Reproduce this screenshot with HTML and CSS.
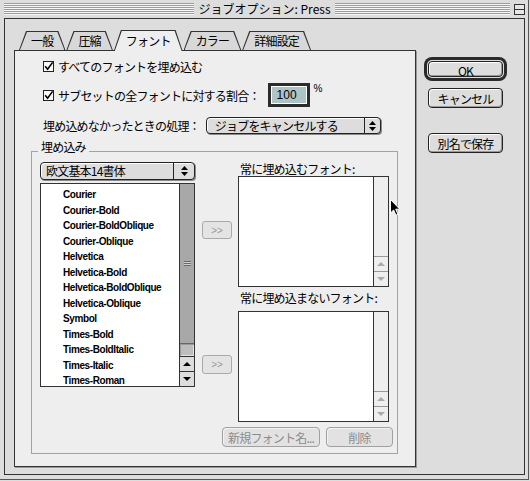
FILE: index.html
```html
<!DOCTYPE html>
<html lang="ja">
<head>
    <meta charset="UTF-8">
    <title>ジョブオプション: Press</title>
    <link rel="stylesheet" href="styles.css">
</head>
<body>
<div class="window">
    <div class="titlebar">
        <span class="stripes"></span>
        <span class="title">ジョブオプション: Press</span>
        <span class="titlebar-right">
            <span class="stripes"></span>
            <span class="collapse-box"></span>
        </span>
    </div>

    <div class="frame">
        <div class="tab-area">
            <div class="tabs">
                <div class="tab"><span class="tab-label">一般</span></div>
                <div class="tab"><span class="tab-label">圧縮</span></div>
                <div class="tab active"><span class="tab-label">フォント</span></div>
                <div class="tab"><span class="tab-label">カラー</span></div>
                <div class="tab"><span class="tab-label">詳細設定</span></div>
            </div>

            <div class="panel">
                <label class="option first">
                    <svg class="checkbox" width="11" height="11" viewBox="0 0 11 11"><rect x="0.5" y="0.5" width="10" height="10" fill="#fafafa" stroke="#222"/><path d="M2.2 5.2 L4.6 8.2 L9.6 1.4" fill="none" stroke="#000" stroke-width="1.6"/></svg>
                    <span>すべてのフォントを埋め込む</span>
                </label>

                <label class="option subset">
                    <svg class="checkbox" width="11" height="11" viewBox="0 0 11 11"><rect x="0.5" y="0.5" width="10" height="10" fill="#fafafa" stroke="#222"/><path d="M2.2 5.2 L4.6 8.2 L9.6 1.4" fill="none" stroke="#000" stroke-width="1.6"/></svg>
                    <span>サブセットの全フォントに対する割合：</span>
                    <span class="percent-field">100</span>
                    <span class="percent-sign">%</span>
                </label>

                <div class="option failed">
                    <span>埋め込めなかったときの処理：</span>
                    <div class="popup job-action">
                        <span class="popup-label">ジョブをキャンセルする</span>
                        <span class="popup-arrows">
                            <svg width="7" height="10" viewBox="0 0 7 10"><path d="M3.5 0 L7 4 L0 4 Z M0 6 L7 6 L3.5 10 Z" fill="#000"/></svg>
                        </span>
                    </div>
                </div>

                <fieldset class="embed-group">
                    <legend>埋め込み</legend>
                    <div class="embed-columns">
                        <div class="left-col">
                            <div class="popup font-set">
                                <span class="popup-label">欧文基本14書体</span>
                                <span class="popup-arrows">
                                    <svg width="7" height="10" viewBox="0 0 7 10"><path d="M3.5 0 L7 4 L0 4 Z M0 6 L7 6 L3.5 10 Z" fill="#000"/></svg>
                                </span>
                            </div>
                            <div class="list-box font-list">
                                <ul>
                                    <li>Courier</li>
                                    <li>Courier-Bold</li>
                                    <li>Courier-BoldOblique</li>
                                    <li>Courier-Oblique</li>
                                    <li>Helvetica</li>
                                    <li>Helvetica-Bold</li>
                                    <li>Helvetica-BoldOblique</li>
                                    <li>Helvetica-Oblique</li>
                                    <li>Symbol</li>
                                    <li>Times-Bold</li>
                                    <li>Times-BoldItalic</li>
                                    <li>Times-Italic</li>
                                    <li>Times-Roman</li>
                                </ul>
                                <div class="scrollbar">
                                    <div class="thumb"><span class="grip"></span></div>
                                    <div class="track"></div>
                                    <div class="arrow up"></div>
                                    <div class="arrow down"></div>
                                </div>
                            </div>
                        </div>

                        <div class="mid-col">
                            <button class="move-btn to-always" disabled>&gt;&gt;</button>
                            <button class="move-btn to-never" disabled>&gt;&gt;</button>
                        </div>

                        <div class="right-col">
                            <div class="list-caption">常に埋め込むフォント:</div>
                            <div class="list-box side-list">
                                <ul></ul>
                                <div class="scrollbar idle">
                                    <div class="track"></div>
                                    <div class="arrow up"></div>
                                    <div class="arrow down"></div>
                                </div>
                            </div>
                            <div class="list-caption second">常に埋め込まないフォント:</div>
                            <div class="list-box side-list">
                                <ul></ul>
                                <div class="scrollbar idle">
                                    <div class="track"></div>
                                    <div class="arrow up"></div>
                                    <div class="arrow down"></div>
                                </div>
                            </div>
                        </div>
                    </div>

                    <div class="group-actions">
                        <button class="btn small new-name" disabled>新規フォント名...</button>
                        <button class="btn small remove" disabled>削除</button>
                    </div>
                </fieldset>
            </div>
        </div>

        <div class="side-buttons">
            <button class="btn default">OK</button>
            <button class="btn cancel">キャンセル</button>
            <button class="btn save-as">別名で保存</button>
        </div>
    </div>

    <svg class="cursor" width="11" height="17" viewBox="0 0 11 17"><path d="M0.5 0.5 L0.5 14 L3.6 11 L6 16.2 L8 15.3 L5.7 10.2 L9.8 10.2 Z" fill="#000" stroke="#fff" stroke-width="1"/></svg>
</div>
</body>
</html>
```

FILE: styles.css
```css
* {
    box-sizing: border-box;
}
body {
    margin: 0;
    background-color: #dddddd;
    font-family: "Noto Sans CJK JP", "Liberation Sans", sans-serif;
    font-size: 12px;
    letter-spacing: -0.8px;
    color: #000;
}
.window {
    position: relative;
    width: 529px;
    height: 480px;
    border-right: 1px solid #555;
    border-bottom: 1px solid #555;
}

/* title bar */
.titlebar {
    display: grid;
    grid-template-columns: 1fr auto 1fr;
    align-items: center;
    height: 18px;
    padding: 0 3px 0 4px;
}
.stripes {
    display: block;
    height: 12px;
    background: repeating-linear-gradient(to bottom, #9c9c9c 0 1px, #f6f6f6 1px 2px);
}
.title {
    padding: 0 4px;
    line-height: 18px;
    letter-spacing: 0;
    white-space: pre;
}
.titlebar-right {
    display: flex;
    align-items: center;
}
.titlebar-right .stripes {
    flex: 1;
}
.collapse-box {
    width: 11px;
    height: 11px;
    margin-left: 4px;
    border: 1px solid #333;
    background: linear-gradient(#333, #333) center / 100% 1px no-repeat, #e6e6e6;
}

/* window body */
.frame {
    display: flex;
    width: 521px;
    height: 457px;
    margin-left: 4px;
    border: 1px solid #333;
}
.tab-area {
    width: 402px;
    margin: 11px 0 0 9px;
}
.tabs {
    display: flex;
    align-items: flex-end;
    gap: 1px;
    height: 20px;
    padding-left: 5px;
}
.tab {
    padding: 1px 1px 0;
    background: #333;
    clip-path: polygon(0 100%, 7px 0, calc(100% - 7px) 0, 100% 100%);
}
.tab-label {
    display: block;
    height: 18px;
    line-height: 18px;
    padding: 0 11px;
    background: #d8d8d8;
    clip-path: polygon(0 100%, 7px 0, calc(100% - 7px) 0, 100% 100%);
}
.tab.active {
    position: relative;
    margin-bottom: -1px;
}
.tab.active .tab-label {
    height: 20px;
    line-height: 19px;
    background: #eeeeee;
}
.panel {
    display: flex;
    flex-direction: column;
    height: 417px;
    border: 1px solid #333;
    background: #eeeeee;
    box-shadow: 1px 1px 0 #999;
}

/* option rows */
.option {
    display: flex;
    align-items: center;
    margin: 9px 0 0 28px;
    height: 16px;
}
.option.first {
    margin-top: 7px;
}
.option.subset {
    height: 24px;
}
.option.failed {
    margin-top: 10px;
    height: 17px;
}
.checkbox {
    margin-right: 4px;
    flex: none;
}
.percent-field {
    width: 42px;
    height: 24px;
    margin-left: 8px;
    padding-left: 6px;
    border: 3px solid #2b2b2b;
    background: #aec3c6;
    box-shadow: inset 0 0 0 1px #fff;
    font-family: "Liberation Sans", sans-serif;
    font-size: 12px;
    letter-spacing: 0;
    line-height: 18px;
}
.percent-sign {
    align-self: flex-start;
    margin-left: 4px;
    font-family: "Liberation Sans", sans-serif;
    font-size: 10px;
    letter-spacing: 0;
}

/* popup menus */
.popup {
    display: flex;
    height: 18px;
    border: 1px solid #222;
    border-radius: 4px;
    background: #dddddd;
    box-shadow: inset 1px 1px 0 #fff, 1px 1px 0 #8a8a8a;
}
.popup-label {
    flex: 1;
    padding-left: 5px;
    line-height: 16px;
    white-space: nowrap;
}
.popup-arrows {
    display: flex;
    align-items: center;
    justify-content: center;
    width: 16px;
    border-left: 1px solid #222;
}
.job-action {
    width: 175px;
    height: 17px;
    margin-left: 6px;
}
.job-action .popup-label {
    padding-left: 8px;
    line-height: 15px;
}
.font-set .popup-arrows {
    width: 21px;
}

/* embedding group */
.embed-group {
    margin: 7px 17px 0 16px;
    padding: 1px 7px 6px 8px;
    min-width: 0;
    border: 1px solid #a2a2a2;
}
.embed-group legend {
    margin-left: -2px;
    padding: 0 3px 8px;
    line-height: 12px;
}
.embed-columns {
    display: flex;
}
.left-col {
    display: flex;
    flex-direction: column;
    gap: 3px;
    width: 155px;
}
.mid-col {
    display: flex;
    flex-direction: column;
    width: 30px;
    margin: 0 6px 0 7px;
}
.right-col {
    width: 151px;
}

/* lists */
.list-box {
    display: flex;
    border: 1px solid #333;
    background: #fff;
}
.list-box ul {
    flex: 1;
    margin: 0;
    list-style: none;
}
.font-list {
    height: 204px;
}
.font-list ul {
    padding: 3px 0 0 22px;
    font-family: "Liberation Sans", sans-serif;
    font-size: 10px;
    font-weight: bold;
    letter-spacing: -0.4px;
    line-height: 15.5px;
}
.side-list {
    height: 111px;
}
.scrollbar {
    display: flex;
    flex-direction: column;
    width: 15px;
    border-left: 1px solid #333;
    background: #eeeeee;
}
.thumb {
    display: flex;
    align-items: center;
    justify-content: center;
    height: 160px;
    background: #a8a8a8;
    border-bottom: 1px solid #666;
}
.grip {
    width: 7px;
    height: 5px;
    background: repeating-linear-gradient(to bottom, #6a6a6a 0 1px, #d0d0d0 1px 2px);
}
.track {
    flex: 1;
}
.font-list .track {
    background: #bdbdbd;
    box-shadow: inset 1px 1px 0 #9a9a9a, inset -1px -1px 0 #e4e4e4;
}
.arrow {
    position: relative;
    height: 15px;
    border-top: 1px solid #333;
    background: #dddddd;
}
.arrow::after {
    content: "";
    position: absolute;
    left: 3px;
    top: 5px;
    border-left: 4px solid transparent;
    border-right: 4px solid transparent;
}
.arrow.up::after {
    border-bottom: 4px solid #000;
}
.arrow.down::after {
    border-top: 4px solid #000;
}
.scrollbar.idle .arrow {
    border-top-color: #999;
    background: #eeeeee;
}
.scrollbar.idle .arrow.up::after {
    border-bottom-color: #aaa;
}
.scrollbar.idle .arrow.down::after {
    border-top-color: #aaa;
}
.list-caption {
    height: 14px;
    padding-left: 2px;
    line-height: 14px;
}
.list-caption.second {
    margin: 4px 0 6px;
}

/* buttons */
button {
    font-family: inherit;
    font-size: 12px;
    letter-spacing: -0.8px;
    color: #000;
    padding: 0;
}
.move-btn {
    width: 30px;
    height: 18px;
    border: 1px solid #aaa;
    border-radius: 3px;
    background: #e4e4e4;
    color: #9a9a9a;
    font-family: "Liberation Sans", sans-serif;
    font-size: 10px;
    letter-spacing: 0;
}
.move-btn.to-always {
    margin-top: 59px;
}
.move-btn.to-never {
    height: 19px;
    margin-top: 116px;
}
.btn {
    width: 75px;
    height: 20px;
    border: 1px solid #222;
    border-radius: 4px;
    background: #dddddd;
    box-shadow: inset 1px 1px 0 #fff, inset -1px -1px 0 #999;
}
.btn.small:disabled {
    border-color: #a0a0a0;
    background: #e2e2e2;
    color: #8c8c8c;
    box-shadow: inset 1px 1px 0 #f4f4f4;
}
.group-actions {
    display: flex;
    justify-content: flex-end;
    gap: 6px;
    margin: 5px -3px 0 0;
}
.btn.new-name {
    width: 98px;
}
.btn.remove {
    width: 67px;
}
.side-buttons {
    display: flex;
    flex-direction: column;
    margin-left: 12px;
    padding-top: 42px;
}
.btn.default {
    height: 16px;
    box-shadow: inset 1px 1px 0 #fff, inset -1px -1px 0 #999, 0 0 0 1px #ddd, 0 0 0 4px #2a2a2a;
    border-radius: 4px;
}
.btn.cancel {
    margin-top: 11px;
}
.btn.save-as {
    margin-top: 25px;
}

.cursor {
    position: absolute;
    left: 390px;
    top: 199px;
}
```
